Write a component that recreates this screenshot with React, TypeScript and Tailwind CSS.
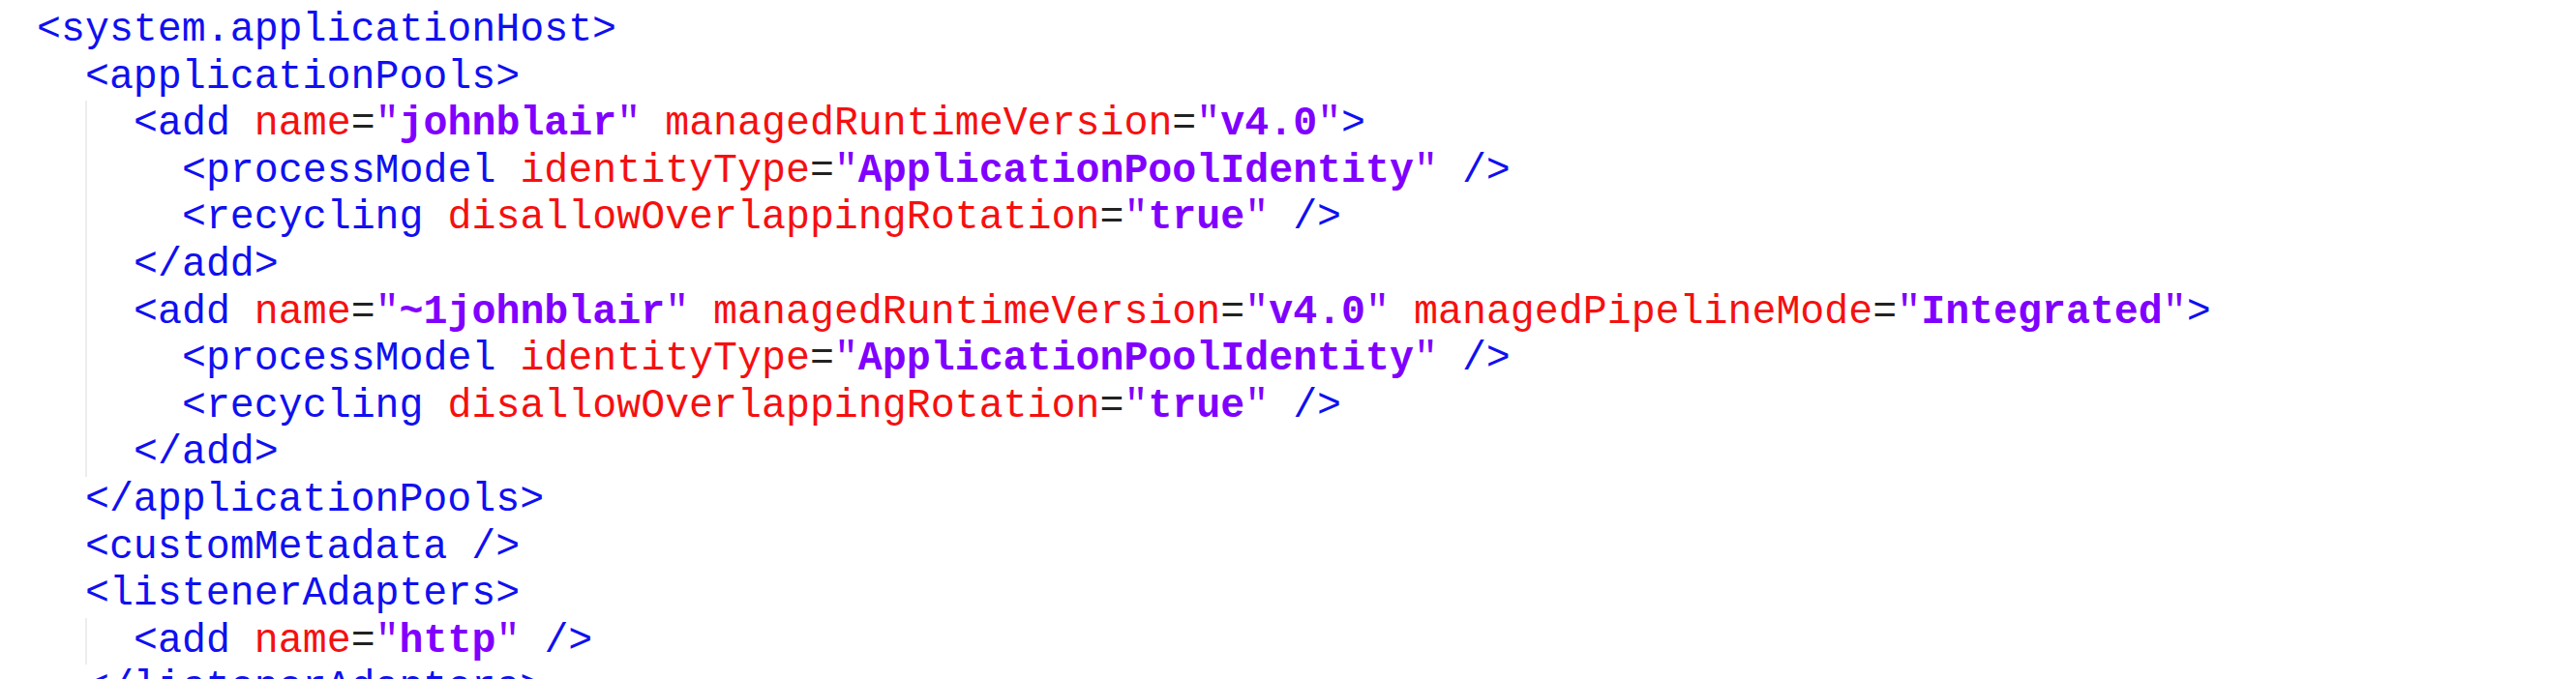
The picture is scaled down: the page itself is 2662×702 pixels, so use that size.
type Tok = { t: string; c: "tag" | "attr" | "eq" | "q" | "val" | "sp" };

const tag = (t: string): Tok => ({ t, c: "tag" });
const sp = (t = " "): Tok => ({ t, c: "sp" });
const attr = (name: string, value: string): Tok[] => [
  { t: name, c: "attr" },
  { t: "=", c: "eq" },
  { t: '"', c: "q" },
  { t: value, c: "val" },
  { t: '"', c: "q" },
];

// indent = number of spaces after the left margin, guide = draw the indent guide
const lines: { indent: number; guide?: boolean; toks: Tok[] }[] = [
  { indent: 0, toks: [tag("<system.applicationHost>")] },
  { indent: 2, toks: [tag("<applicationPools>")] },
  {
    indent: 4,
    guide: true,
    toks: [tag("<add"), sp(), ...attr("name", "johnblair"), sp(), ...attr("managedRuntimeVersion", "v4.0"), tag(">")],
  },
  {
    indent: 6,
    guide: true,
    toks: [tag("<processModel"), sp(), ...attr("identityType", "ApplicationPoolIdentity"), sp(), tag("/>")],
  },
  {
    indent: 6,
    guide: true,
    toks: [tag("<recycling"), sp(), ...attr("disallowOverlappingRotation", "true"), sp(), tag("/>")],
  },
  { indent: 4, guide: true, toks: [tag("</add>")] },
  {
    indent: 4,
    guide: true,
    toks: [
      tag("<add"),
      sp(),
      ...attr("name", "~1johnblair"),
      sp(),
      ...attr("managedRuntimeVersion", "v4.0"),
      sp(),
      ...attr("managedPipelineMode", "Integrated"),
      tag(">"),
    ],
  },
  {
    indent: 6,
    guide: true,
    toks: [tag("<processModel"), sp(), ...attr("identityType", "ApplicationPoolIdentity"), sp(), tag("/>")],
  },
  {
    indent: 6,
    guide: true,
    toks: [tag("<recycling"), sp(), ...attr("disallowOverlappingRotation", "true"), sp(), tag("/>")],
  },
  { indent: 4, guide: true, toks: [tag("</add>")] },
  { indent: 2, toks: [tag("</applicationPools>")] },
  { indent: 2, toks: [tag("<customMetadata />")] },
  { indent: 2, toks: [tag("<listenerAdapters>")] },
  { indent: 4, guide: true, toks: [tag("<add"), sp(), ...attr("name", "http"), sp(), tag("/>")] },
  { indent: 2, toks: [tag("</listenerAdapters>")] },
];

const colour: Record<Tok["c"], string> = {
  tag: "text-[#1010f0]",
  attr: "text-[#f51010]",
  eq: "text-[#222222]",
  q: "text-[#8000ff]",
  val: "text-[#8000ff] font-bold",
  sp: "",
};

function Toks({ toks }: { toks: Tok[] }) {
  return (
    <>
      {toks.map((k, i) => (
        <span key={i} className={colour[k.c]}>
          {k.t}
        </span>
      ))}
    </>
  );
}

export default function App() {
  return (
    <div className="w-[2662px] h-[702px] overflow-hidden bg-white pt-[7px] font-['Liberation_Mono','Courier_New',monospace] text-[41.6px] leading-[48.6px] whitespace-pre">
      {lines.map((line, idx) =>
        line.guide ? (
          <div key={idx} className="ml-[88px] h-[48.6px] border-l-2 border-[#ededed] pl-[48px]">
            {" ".repeat(line.indent - 4)}
            <Toks toks={line.toks} />
          </div>
        ) : (
          <div key={idx} className="pl-[38px] h-[48.6px]">
            {" ".repeat(line.indent)}
            <Toks toks={line.toks} />
          </div>
        )
      )}
    </div>
  );
}
